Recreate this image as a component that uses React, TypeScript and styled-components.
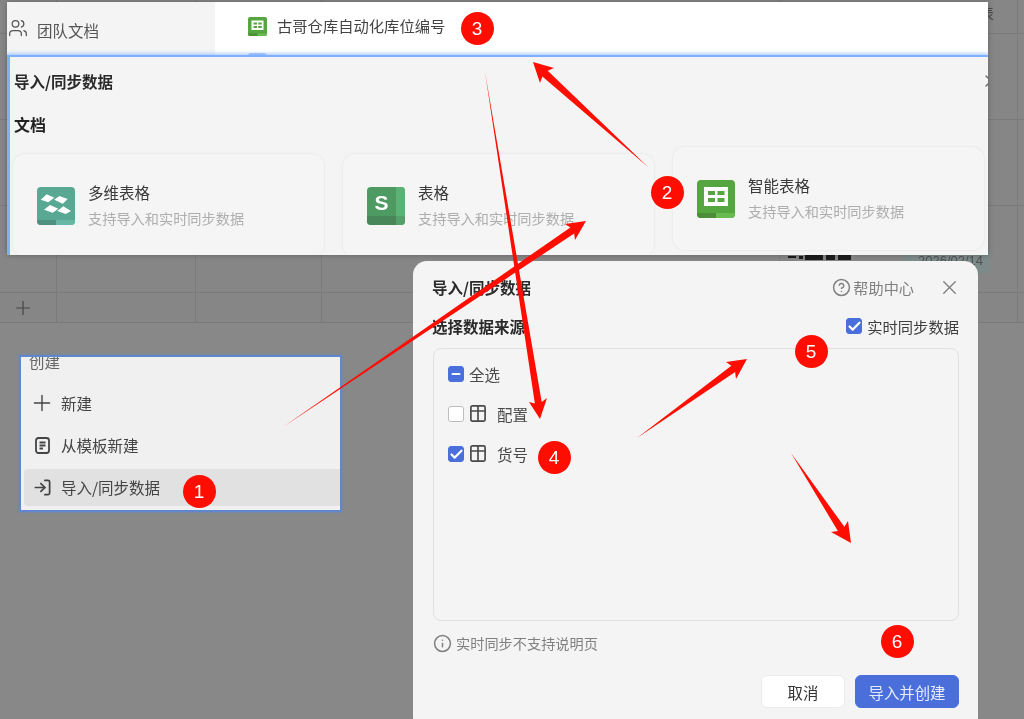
import React from "react";
import styled, { createGlobalStyle } from "styled-components";
import { Users, Plus, LogIn, CircleHelp, X, Info, Check, Minus } from "lucide-react";

const GlobalStyle = createGlobalStyle`
  html, body { margin: 0; padding: 0; background: #888888; overflow: hidden; }
  body { font-family: "Noto Sans CJK SC", "Noto Sans", "Liberation Sans", sans-serif; }
`;

const Stage = styled.div`
  position: relative;
  width: 1024px;
  height: 719px;
  overflow: hidden;
  background: #888888;
  filter: blur(0.3px);
`;

const SheetGrid = styled.div`
  position: absolute;
  inset: 0 0 auto 0;
  height: 322px;
  border-bottom: 1px solid #7a7a7a;
  box-sizing: content-box;
  background-color: #868686;
  background-repeat: no-repeat;
  background-image:
    linear-gradient(#7a7a7a, #7a7a7a), linear-gradient(#7a7a7a, #7a7a7a),
    linear-gradient(#7a7a7a, #7a7a7a), linear-gradient(#7a7a7a, #7a7a7a),
    linear-gradient(#7a7a7a, #7a7a7a), linear-gradient(#7a7a7a, #7a7a7a),
    linear-gradient(#7a7a7a, #7a7a7a), linear-gradient(#7a7a7a, #7a7a7a),
    linear-gradient(#7a7a7a, #7a7a7a);
  background-size:
    1px 100%, 1px 100%, 1px 100%, 1px 100%,
    100% 1px, 100% 1px, 100% 1px, 100% 1px,
    1px 100%;
  background-position:
    56px 0, 195px 0, 321px 0, 1017px 0,
    0 33px, 0 119px, 0 205px, 0 292px,
    779px 0;
`;

const SheetPlus = styled.div`
  position: absolute;
  left: 12px;
  top: 297px;
  display: flex;
  color: #444444;
`;

const SheetGlyph = styled.div`
  position: absolute;
  left: 979px;
  top: 2px;
  font-size: 15px;
  line-height: 22px;
  color: #4a4a4a;
`;

const DatePill = styled.div`
  position: absolute;
  left: 904px;
  top: 248px;
  width: 86px;
  height: 25px;
  padding-left: 14px;
  box-sizing: border-box;
  border-radius: 4px;
  background: #7d8a8a;
  color: #505050;
  font-size: 13px;
  line-height: 26px;
  font-family: "Liberation Sans", sans-serif;
`;

const Barcode = styled.svg`
  position: absolute;
  left: 785px;
  top: 254px;
`;

const ImportWindow = styled.section`
  position: absolute;
  left: 7px;
  top: 2px;
  width: 981px;
  height: 253px;
  display: flex;
  flex-direction: column;
  overflow: hidden;
  background: #ffffff;
  box-shadow: 0 0 5px rgba(0, 0, 0, 0.28);
`;

const TopStrip = styled.div`
  display: flex;
  height: 53px;
  flex: none;
`;

const SideNav = styled.nav`
  width: 208px;
  flex: none;
  display: flex;
  align-items: flex-start;
  gap: 10px;
  padding: 17px 0 0 2px;
  box-sizing: border-box;
  background: #f4f4f4;
  color: #555555;
  font-size: 15.5px;
  line-height: 22px;
`;

const FileList = styled.div`
  flex: 1;
  display: flex;
  flex-direction: column;
  gap: 16px;
  padding: 14px 0 0 33px;
  overflow: hidden;
  background: #ffffff;
`;

const FileRow = styled.div<{ $faded?: boolean }>`
  display: flex;
  align-items: center;
  gap: 10px;
  height: 20px;
  flex: none;
  font-size: 15.3px;
  line-height: 18px;
  color: ${(p) => (p.$faded ? "#b9cdf3" : "#444444")};
`;

const FileName = styled.span`
  margin-top: -2px;
`;

const ImportSheet = styled.div`
  flex: 1;
  min-height: 0;
  position: relative;
  background: #f4f4f4;
  border-top: 2px solid #7fb0ff;
  border-left: 3px solid #7fb0ff;
  box-shadow: 0 -2px 3px rgba(127, 176, 255, 0.55);
  padding: 13px 0 0 4px;
  overflow: hidden;
`;

const SheetHead = styled.div`
  display: flex;
  justify-content: space-between;
  align-items: center;
  height: 22px;
  margin-right: -8px;
  color: #666666;
`;

const StrongTitle = styled.h2`
  margin: 0;
  font-size: 15.5px;
  line-height: 22px;
  font-weight: 700;
  color: #2a2a2a;
`;

const GroupTitle = styled.h3`
  margin: 20px 0 0;
  font-size: 16px;
  line-height: 24px;
  font-weight: 700;
  color: #222222;
`;

const CardRow = styled.div`
  display: flex;
  align-items: flex-start;
  gap: 19px;
  margin: 11px 0 0 -1px;
`;

const TypeCard = styled.div<{ $raised?: boolean }>`
  width: 311px;
  height: 103px;
  flex: none;
  margin-top: ${(p) => (p.$raised ? "0" : "7px")};
  display: flex;
  align-items: center;
  gap: 13px;
  padding-left: 24px;
  box-sizing: border-box;
  border-radius: 12px;
  background: #f5f5f5;
  box-shadow: 0 0 3px rgba(0, 0, 0, 0.08);
`;

const CardText = styled.div`
  display: flex;
  flex-direction: column;
  gap: 4px;
  padding-bottom: 2px;
`;

const CardName = styled.div`
  font-size: 15.5px;
  line-height: 22px;
  color: #3a3a3a;
`;

const CardHint = styled.div`
  font-size: 14.2px;
  line-height: 22px;
  color: #aeaeae;
`;

const CreateMenu = styled.aside`
  position: absolute;
  left: 19px;
  top: 355px;
  width: 323px;
  height: 157px;
  box-sizing: border-box;
  border: 2px solid #5f88cc;
  box-shadow: 0 0 3px rgba(95, 136, 204, 0.7);
  background: #f0f0f0;
  overflow: hidden;
  padding-left: 3px;
  display: flex;
  flex-direction: column;
  color: #444444;
`;

const MenuLabel = styled.div`
  margin: -7px 0 13px 5px;
  font-size: 15.5px;
  line-height: 22px;
  color: #666666;
`;

const MenuItem = styled.div<{ $active?: boolean }>`
  height: 37px;
  flex: none;
  box-sizing: border-box;
  margin-bottom: 5px;
  padding: 0 0 1px 10px;
  display: flex;
  align-items: center;
  gap: 11px;
  border-radius: 4px 0 0 4px;
  font-size: 15.5px;
  background: ${(p) => (p.$active ? "#e1e1e1" : "transparent")};
`;

const IconSlot = styled.span<{ $w: number }>`
  width: ${(p) => p.$w}px;
  height: ${(p) => p.$w}px;
  flex: none;
  display: flex;
  align-items: center;
  justify-content: center;
  & > svg { flex: none; }
`;

const DataDialog = styled.section`
  position: absolute;
  left: 413px;
  top: 261px;
  width: 565px;
  height: 470px;
  box-sizing: border-box;
  padding: 15px 19px 0 19px;
  background: #f4f4f4;
  border-radius: 14px;
  display: flex;
  flex-direction: column;
`;

const DialogHead = styled.header`
  display: flex;
  align-items: center;
  justify-content: space-between;
  height: 22px;
`;

const HeadTools = styled.div`
  display: flex;
  align-items: center;
  gap: 29px;
  padding-right: 3px;
  color: #7d7d7d;
`;

const HelpLink = styled.div`
  display: flex;
  align-items: center;
  gap: 4px;
  font-size: 15.2px;
  line-height: 22px;
  color: #808080;
`;

const SourceRow = styled.div`
  display: flex;
  align-items: center;
  justify-content: space-between;
  height: 22px;
  margin-top: 17px;
`;

const SyncToggle = styled.label`
  display: flex;
  align-items: center;
  gap: 5px;
  font-size: 15.3px;
  color: #3d3d3d;
`;

const SourceBox = styled.div`
  margin: 11px 0 0 1px;
  height: 273px;
  flex: none;
  box-sizing: border-box;
  border: 1px solid #e0e0e0;
  border-radius: 8px;
  padding: 15px 0 0 14px;
  display: flex;
  flex-direction: column;
  gap: 20px;
`;

const SourceItem = styled.div`
  display: flex;
  align-items: center;
  height: 20px;
  font-size: 15.5px;
  color: #4a4a4a;
`;

const TickBox = styled.span<{ $on?: boolean }>`
  width: 16px;
  height: 16px;
  flex: none;
  box-sizing: border-box;
  border-radius: 3px;
  display: flex;
  align-items: center;
  justify-content: center;
  color: #ffffff;
  background: ${(p) => (p.$on ? "#4a6fdb" : "#ffffff")};
  border: 1px solid ${(p) => (p.$on ? "#4a6fdb" : "#bdbdbd")};
  & > svg { flex: none; }
`;

const AllLabel = styled.span`
  margin-left: 5px;
`;

const TableGlyph = styled.svg`
  margin-left: 6px;
  margin-right: 11px;
  margin-top: -1px;
  flex: none;
  color: #4a4a4a;
`;

const SyncNote = styled.div`
  margin-top: 11px;
  height: 22px;
  display: flex;
  align-items: center;
  gap: 6px;
  margin-left: 2px;
  font-size: 14.2px;
  color: #808080;
`;

const DialogFoot = styled.footer`
  margin-top: 21px;
  display: flex;
  justify-content: flex-end;
  gap: 10px;
`;

const FootButton = styled.button<{ $primary?: boolean }>`
  height: 33px;
  width: ${(p) => (p.$primary ? "104px" : "84px")};
  padding: 0;
  border-radius: 6px;
  font-family: inherit;
  font-size: 15.4px;
  border: 1px solid ${(p) => (p.$primary ? "#4a6fdb" : "#ebebeb")};
  background: ${(p) => (p.$primary ? "#4a6fdb" : "#ffffff")};
  color: ${(p) => (p.$primary ? "#e6ecfb" : "#333333")};
`;

const ArrowLayer = styled.svg`
  position: absolute;
  inset: 0;
  pointer-events: none;
`;

const StepBadge = styled.div<{ $x: number; $y: number }>`
  position: absolute;
  left: ${(p) => p.$x - 16.5}px;
  top: ${(p) => p.$y - 16.5}px;
  width: 33px;
  height: 33px;
  border-radius: 50%;
  background: #ff0d00;
  color: #ffffff;
  font-family: "Liberation Sans", sans-serif;
  font-size: 19px;
  line-height: 33px;
  text-align: center;
`;

type Pt = [number, number];

const arrowPoints = (tail: Pt, tip: Pt, a: Pt, b: Pt) => {
  const mid: Pt = [(a[0] + b[0]) / 2, (a[1] + b[1]) / 2];
  const lerp = (p: Pt, q: Pt, t: number): Pt => [p[0] + (q[0] - p[0]) * t, p[1] + (q[1] - p[1]) * t];
  const fwd: Pt = [(tip[0] - mid[0]) * 0.14, (tip[1] - mid[1]) * 0.14];
  const n1 = lerp(a, mid, 0.62);
  const n2 = lerp(b, mid, 0.62);
  const shift = (p: Pt): Pt => [p[0] + fwd[0], p[1] + fwd[1]];
  return [tail, shift(n1), a, tip, b, shift(n2)].map((p) => p.join(",")).join(" ");
};

const ARROWS: [Pt, Pt, Pt, Pt][] = [
  [[648, 167], [533, 62], [554, 68], [540, 83]],
  [[283, 427], [586, 221], [565, 224], [575, 240]],
  [[485, 72], [540, 419], [547, 398], [529, 402]],
  [[637, 438], [747, 359], [726, 362], [736, 379]],
  [[791, 453], [851, 543], [831, 532], [848, 521]],
];

const BADGES: [number, number, number][] = [
  [1, 199, 491],
  [2, 667, 192],
  [3, 477, 28],
  [4, 554, 457],
  [5, 811, 351],
  [6, 897, 641],
];

const SmartIcon = ({ size }: { size: number }) => (
  <svg width={size} height={size} viewBox="0 0 38 38" style={{ flex: "none" }}>
    <rect width="38" height="38" rx="4" fill="#55a640" />
    <path d="M0 33h19v5H4a4 4 0 0 1-4-4z" fill="#4a8f38" />
    <path d="M19 33h19v1a4 4 0 0 1-4 4H19z" fill="#6aba52" />
    <rect x="7" y="7" width="24" height="19" fill="#ffffff" />
    <rect x="11" y="11" width="7" height="4" fill="#55a640" />
    <rect x="20.5" y="11" width="7" height="4" fill="#55a640" />
    <rect x="11" y="18" width="7" height="4" fill="#55a640" />
    <rect x="20.5" y="18" width="7" height="4" fill="#55a640" />
  </svg>
);

const MultiIcon = () => (
  <svg width="38" height="38" viewBox="0 0 38 38" style={{ flex: "none" }}>
    <rect width="38" height="38" rx="4" fill="#58a894" />
    <path d="M0 33h19v5H4a4 4 0 0 1-4-4z" fill="#4f9180" />
    <path d="M19 33h19v1a4 4 0 0 1-4 4H19z" fill="#66b8a4" />
    <g fill="#ffffff">
      <polygon points="3.700,12.700 9.700,7.300 17.300,10.700 11.300,15.300" />
      <polygon points="17.300,12.700 22.300,9 30.700,12 25.700,16.700" />
      <polygon points="7,22.700 13,18 21.300,21.700 15.700,25.700" />
      <polygon points="20.300,24 26.300,19.300 34,24 28.700,27" />
    </g>
  </svg>
);

const SheetIcon = () => (
  <svg width="38" height="38" viewBox="0 0 38 38" style={{ flex: "none" }}>
    <rect width="38" height="38" rx="4" fill="#4d9a62" />
    <path d="M29 0h5a4 4 0 0 1 4 4v25h-9z" fill="#5cb274" />
    <path d="M0 29h29v9H4a4 4 0 0 1-4-4z" fill="#48875a" />
    <path d="M29 29h9v5a4 4 0 0 1-4 4h-5z" fill="#54a06a" />
    <text x="14.500" y="22.700" textAnchor="middle" fontFamily="Liberation Sans, sans-serif" fontWeight="700" fontSize="21" fill="#ffffff">S</text>
  </svg>
);

const TableIcon = () => (
  <TableGlyph width="16" height="17" viewBox="0 0 16 17" fill="none" stroke="currentColor" strokeWidth="1.7">
    <rect x="0.900" y="0.900" width="14.200" height="15.200" rx="1.500" />
    <path d="M0.900 6h14.200M8 0.900v15.200" />
  </TableGlyph>
);

const TemplateIcon = () => (
  <svg width="15" height="17" viewBox="0 0 15 17" fill="none" stroke="currentColor" strokeWidth="1.8" style={{ flex: "none" }}>
    <rect x="1" y="1" width="13" height="15" rx="2.500" />
    <path d="M4.500 5.500h6M4.500 8.500h6M4.500 11.500h3.500" />
  </svg>
);

const App = () => (
  <>
    <GlobalStyle />
    <Stage>
      <SheetGrid />
      <SheetGlyph>表</SheetGlyph>
      <Barcode width="72" height="8" viewBox="0 0 72 8">
        <path d="M3 2h8v2H3zM14 2h4v3h-4zM20 1h18v5H20zM41 1h9v5h-9zM53 1h13v5H53z" fill="#1c1c1c" />
      </Barcode>
      <DatePill>2026/02/14</DatePill>
      <SheetPlus>
        <Plus size={22} strokeWidth={1.3} />
      </SheetPlus>

      <ImportWindow>
        <TopStrip>
          <SideNav>
            <IconSlot $w={18}>
              <Users size={20} strokeWidth={1.5} />
            </IconSlot>
            团队文档
          </SideNav>
          <FileList>
            <FileRow>
              <SmartIcon size={19} />
              <FileName>古哥仓库自动化库位编号</FileName>
            </FileRow>
            <FileRow $faded>
              <svg width="19" height="19" viewBox="0 0 19 19" style={{ flex: "none" }}>
                <rect width="19" height="19" rx="3" fill="#a9c4fa" />
              </svg>
              xxx-仓储库位模型—系统映射模型
            </FileRow>
          </FileList>
        </TopStrip>
        <ImportSheet>
          <SheetHead>
            <StrongTitle>导入/同步数据</StrongTitle>
            <IconSlot $w={11}>
              <X size={20} strokeWidth={1.5} />
            </IconSlot>
          </SheetHead>
          <GroupTitle>文档</GroupTitle>
          <CardRow>
            <TypeCard>
              <MultiIcon />
              <CardText>
                <CardName>多维表格</CardName>
                <CardHint>支持导入和实时同步数据</CardHint>
              </CardText>
            </TypeCard>
            <TypeCard>
              <SheetIcon />
              <CardText>
                <CardName>表格</CardName>
                <CardHint>支持导入和实时同步数据</CardHint>
              </CardText>
            </TypeCard>
            <TypeCard $raised>
              <SmartIcon size={38} />
              <CardText>
                <CardName>智能表格</CardName>
                <CardHint>支持导入和实时同步数据</CardHint>
              </CardText>
            </TypeCard>
          </CardRow>
        </ImportSheet>
      </ImportWindow>

      <CreateMenu>
        <MenuLabel>创建</MenuLabel>
        <MenuItem>
          <IconSlot $w={16}>
            <Plus size={26} strokeWidth={1.3} />
          </IconSlot>
          新建
        </MenuItem>
        <MenuItem>
          <IconSlot $w={16}>
            <TemplateIcon />
          </IconSlot>
          从模板新建
        </MenuItem>
        <MenuItem $active>
          <IconSlot $w={16}>
            <LogIn size={19} strokeWidth={2.2} />
          </IconSlot>
          导入/同步数据
        </MenuItem>
      </CreateMenu>

      <DataDialog>
        <DialogHead>
          <StrongTitle>导入/同步数据</StrongTitle>
          <HeadTools>
            <HelpLink>
              <IconSlot $w={16}>
                <CircleHelp size={19} strokeWidth={1.9} />
              </IconSlot>
              帮助中心
            </HelpLink>
            <IconSlot $w={13}>
              <X size={23} strokeWidth={1.4} />
            </IconSlot>
          </HeadTools>
        </DialogHead>
        <SourceRow>
          <StrongTitle>选择数据来源</StrongTitle>
          <SyncToggle>
            <TickBox $on>
              <Check size={15} strokeWidth={3.4} />
            </TickBox>
            实时同步数据
          </SyncToggle>
        </SourceRow>
        <SourceBox>
          <SourceItem>
            <TickBox $on>
              <Minus size={12} strokeWidth={4} />
            </TickBox>
            <AllLabel>全选</AllLabel>
          </SourceItem>
          <SourceItem>
            <TickBox />
            <TableIcon />
            配置
          </SourceItem>
          <SourceItem>
            <TickBox $on>
              <Check size={15} strokeWidth={3.4} />
            </TickBox>
            <TableIcon />
            货号
          </SourceItem>
        </SourceBox>
        <SyncNote>
          <IconSlot $w={16}>
            <Info size={19} strokeWidth={1.9} />
          </IconSlot>
          实时同步不支持说明页
        </SyncNote>
        <DialogFoot>
          <FootButton>取消</FootButton>
          <FootButton $primary>导入并创建</FootButton>
        </DialogFoot>
      </DataDialog>

      <ArrowLayer width="1024" height="719" viewBox="0 0 1024 719">
        {ARROWS.map(([tail, tip, a, b], i) => (
          <polygon key={i} points={arrowPoints(tail, tip, a, b)} fill="#ff0d00" />
        ))}
      </ArrowLayer>

      {BADGES.map(([n, x, y]) => (
        <StepBadge key={n} $x={x} $y={y}>
          {n}
        </StepBadge>
      ))}
    </Stage>
  </>
);

export default App;
